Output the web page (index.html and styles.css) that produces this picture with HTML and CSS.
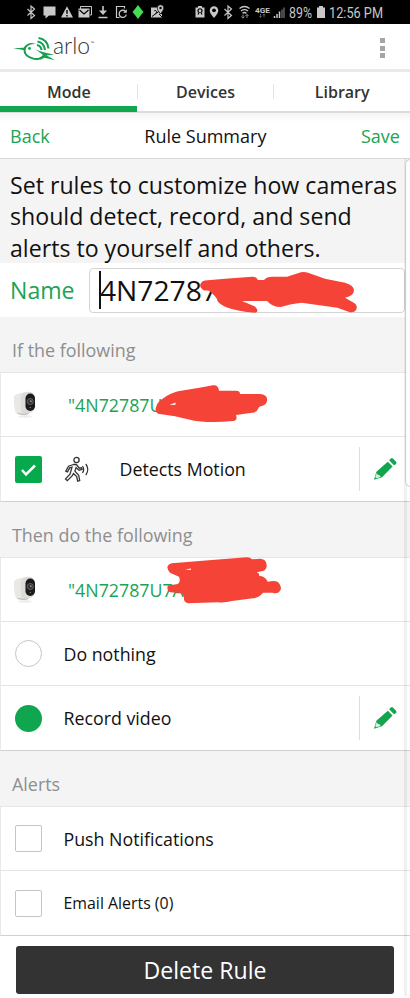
FILE: index.html
```
<!DOCTYPE html>
<html lang="en">
<head>
    <meta charset="UTF-8">
    <meta name="viewport" content="width=device-width, initial-scale=1.0">
    <title>Rule Summary</title>
    <link rel="stylesheet" href="styles.css">
</head>
<body>
    <!-- shared icons -->
    <svg class="defs" width="0" height="0">
        <symbol id="bluetooth" viewBox="0 0 18 24">
            <path d="M5.500 9l7 6.500L9 18.500V6l3.500 3L5.500 15.500" fill="none" stroke="#c8c8c8" stroke-width="1.200"/>
        </symbol>
        <symbol id="pencil" viewBox="0 0 24 24">
            <path d="M14.800 4.700l4.800 4.800L9 20.200 1 22.800l2.400-8z" fill="#13a54e"/>
            <path d="M3.700 16l-1.500 4.200 1.500 1 4-1.300-1.300-1.800-1.400-.2z" fill="#d5f0df"/>
            <path d="M16.100 3.300l1.700-1.700q1.200-1 2.300.1l3 3q.8 1.200 0 2.200L21 8.300z" fill="#13a54e"/>
        </symbol>
        <symbol id="camera" viewBox="0 0 24 30">
            <ellipse cx="12" cy="26.500" rx="7" ry="1.500" fill="#efefef"/>
            <path d="M1 9q0-4 4-5l8-2q8-1 9 5v9q-.5 5-4 6.500l-7 2q-8 .5-9-4.500z" fill="#dcdbd8"/>
            <path d="M1 9q0-4 4-5l6-1.500Q7 5 7.500 11l1 13.200q-6-.2-6.500-4.200z" fill="#e9e8e5"/>
            <rect x="12.500" y="3.500" width="9.500" height="17.500" rx="4.700" fill="#1b1b1d"/>
            <circle cx="17.300" cy="11.500" r="3" fill="#303034" stroke="#68686c"/>
            <circle cx="17.800" cy="11.200" r="1" fill="#8e8e93"/>
            <circle cx="17.300" cy="17.500" r=".8" fill="#77777a"/>
            <path d="M4.500 23.500q6 1.800 11 .3" stroke="#b5b5b5" fill="none"/>
        </symbol>
    </svg>

    <div class="status-bar">
        <div class="status-left">
            <svg width="18" height="24"><use href="#bluetooth"/></svg>
            <svg width="18" height="24"><path d="M3.500 6.500h12v9H9l-3.500 3v-3h-2z" fill="#c8c8c8"/></svg>
            <svg width="18" height="24"><path d="M9 6.300l6 11.200H3z" fill="#c8c8c8"/><path d="M9 10v3.800M9 15v1.400" stroke="#000" stroke-width="1.400"/></svg>
            <svg width="18" height="24"><path d="M4.500 9V6.500h11V15H14" fill="none" stroke="#c8c8c8"/><rect x="2.500" y="8.500" width="11" height="9" fill="#c8c8c8"/><path d="M3.500 10l4.500 4 4.500-4" fill="none" stroke="#000" stroke-width="1.200"/></svg>
            <svg width="18" height="24"><path d="M9 6v7.500M4.500 17.500h9" stroke="#c8c8c8" stroke-width="1.600"/><path d="M5 10.500h8l-4 4.500z" fill="#c8c8c8"/></svg>
            <svg width="18" height="24"><path d="M12.500 8.500v-2h-8v11h3" fill="none" stroke="#c8c8c8" stroke-width="1.200"/><path d="M13.500 11.500a3.600 3.600 0 1 0 .8 3" fill="none" stroke="#c8c8c8" stroke-width="1.300"/><path d="M11.200 12.800h3.600V9.300z" fill="#c8c8c8"/></svg>
            <svg width="18" height="24"><path d="M8 5q2.500 3.500 5.500 7-3 3.500-5.500 7-2.500-3.500-5.500-7Q5.500 8.500 8 5z" fill="#42df55"/></svg>
            <svg width="18" height="24"><path d="M3 7.500h7v4l3 3 1-1v4H3z" fill="#c8c8c8"/><path d="M4 16.500l8-6M6 11a1.500 1.500 0 1 1 1 2.500M11 14l3 3" fill="none" stroke="#000"/><path d="M12.500 14q-3.300-4-3.300-6a3.300 3.300 0 0 1 6.600 0q0 2-3.300 6z" fill="#c8c8c8" stroke="#000" stroke-width=".7"/><circle cx="12.500" cy="8" r="1.200"/></svg>
        </div>
        <div class="status-right">
            <svg width="14" height="24"><path d="M5 6h4v1.500h2.500v10h-9v-10H5z" fill="#c8c8c8"/><path d="M5 14.500l1-2a2 2 0 1 1 2 0l1 2" fill="none" stroke="#000" stroke-width="1.200"/></svg>
            <svg width="14" height="24"><path d="M7 18q-4.300-5-4.300-7.500a4.300 4.300 0 0 1 8.600 0Q11.300 13 7 18z" fill="#c8c8c8"/><circle cx="7" cy="10.300" r="1.900"/></svg>
            <svg width="14" height="24" viewBox="2 0 14 24"><use href="#bluetooth" width="18" height="24"/></svg>
            <svg width="19" height="24"><path d="M4.500 8.500q5-4 10 0M6 11q3.500-2.600 7 0M7.500 13.200q2-1.400 4 0" fill="none" stroke="#c8c8c8" stroke-width="1.300"/><path d="M8 18v-3.500M6.500 16.500L8 18.200l1.500-1.700M12 18v-3.500M10.500 16L12 14.300l1.500 1.700" fill="none" stroke="#999" stroke-width=".9"/></svg>
            <svg width="17" height="24"><text x="1" y="12.500" class="network" textLength="15" lengthAdjust="spacingAndGlyphs">4GE</text><path d="M6.500 14v3.500M5.500 16l1 1.500 1-1.500M10 17.500V14M9 15.500l1-1.500 1 1.500" fill="none" stroke="#777" stroke-width=".7"/></svg>
            <svg width="15" height="24"><path d="M3.500 16v2M6 14v4M8.500 11.500V18" stroke="#c8c8c8" stroke-width="1.500"/><path d="M11 9.500V18M13 7.500V18" stroke="#777" stroke-width="1.200"/></svg>
            <svg width="28" height="24"><text x="3" y="18" class="status-text" textLength="23" lengthAdjust="spacingAndGlyphs">89%</text></svg>
            <svg width="14" height="24"><path d="M5 6h4v1.500h2v10.500H3V7.500h2z" fill="#c8c8c8"/></svg>
            <svg width="58" height="24"><text x="1" y="18" class="status-text" textLength="54" lengthAdjust="spacingAndGlyphs">12:56 PM</text></svg>
        </div>
    </div>

    <header class="app-bar">
        <svg class="logo" width="92" height="32" viewBox="0 0 92 32">
            <path d="M0 12.300l10.500-.5Q13.500 7 19 7l5 1.200q-8-.7-11 3.800-2.500 7 7.500 9.800 6 1.200 9.500-2.800l-7.500-5.700q7.500 3.500 18.500 5.200-4 1-7.500.8l8.500 5-10.500-2.500q-5 3.500-11.500 1.700-10-3-9.500-9.500z" fill="#16a050"/>
            <circle cx="16.500" cy="12.500" r="1.400" fill="#16a050"/>
            <path d="M24 9q4 .8 4.500 5M24.500 5.500q6.500 1 7.500 8.500M25.500 2q9 1.500 10 10.500" fill="none" stroke="#16a050" stroke-width="2.100"/>
            <text x="40" y="18" class="brand" textLength="37" lengthAdjust="spacingAndGlyphs">arlo</text>
            <text x="77.500" y="8.500" class="tm">™</text>
        </svg>
        <div class="overflow-menu"><i></i><i></i><i></i></div>
    </header>

    <nav class="tabs">
        <div class="tab active">Mode</div>
        <div class="tab">Devices</div>
        <div class="tab">Library</div>
    </nav>

    <div class="title-bar">
        <a class="link">Back</a>
        <h1>Rule Summary</h1>
        <a class="link">Save</a>
    </div>

    <main>
        <p class="intro">Set rules to customize how cameras should detect, record, and send alerts to yourself and others.</p>

        <div class="name-row">
            <label>Name</label>
            <div class="name-input">4N72787</div>
            <svg class="redact redact-name" width="160" height="50" viewBox="0 0 160 50">
                <path d="M5 14.500L25 12.700 52 10.700q4-.5 6 3.300h6q3-3.300 8-3.300h15l14-4.500q4-.7 7 .5l17 6 20 4q9 3 9 7.300 0 6-9 7.700l7 4q6 3 4.500 7.300-2 4.500-8 2.700l-11-4-36-5q-10 1-21 4.300-8 0-13.500-6H42l13 5.500q5 5.500 0 6.200l-10-1q-17-2.700-23-6.700-5-3-5-6-5-7-9-8.500H4q-5-3-3.500-6.500 1-3 4.500-3.500z" fill="#f64338"/>
            </svg>
        </div>

        <h2>If the following</h2>
        <div class="row">
            <svg class="camera" width="24" height="30"><use href="#camera"/></svg>
            <span class="device">"4N72787U</span>
            <svg class="redact redact-if" width="116" height="42" viewBox="0 0 116 42">
                <path d="M1.700 25.300Q3 19 9 15.500q7-5.500 15-7.300L44 5l15-2.800q5.500-.7 6 5.500h17q4 0 4 3.300h20q7 .5 7.200 5.500-.2 5-5.200 6.500-3 0-4 3-1 3-4 3.500L82 32q2 5.500-3 6-26 2.500-42-1l-16-3.700-17-2.600q-3-1.700-2.300-5.400z" fill="#f64338"/>
                <path d="M15.500 22l6-2.500v2.300z" fill="#fff"/>
            </svg>
        </div>
        <div class="row last">
            <div class="checkbox checked">
                <svg width="27" height="27"><path d="M7 14l4 4.500 9-9" fill="none" stroke="#fff" stroke-width="2.500"/></svg>
            </div>
            <svg class="motion" width="26" height="27" viewBox="0 0 26 27" fill="none" stroke="#333" stroke-width="1.300">
                <circle cx="12.500" cy="4" r="2.600"/>
                <path d="M9.500 8.500l-5 1.700-2.700 5 1.700.7 2.200-4 2.300-.7-2 7-4.500 4.700 1.800 1.700 5-5 1.200-2 3.200 3 1 4.500 2-.6-1-5.200-3.800-4.200 1.200-3.500 3 2.700 3-1-.5-1.500-2.200.4-3-3.700z"/>
                <path d="M18.500 10q2.300 3.500 0 7M21.800 8q4 5.500 0 11"/>
            </svg>
            <span class="label">Detects Motion</span>
            <div class="edit"><svg width="24" height="24"><use href="#pencil"/></svg></div>
        </div>

        <h2>Then do the following</h2>
        <div class="row">
            <svg class="camera" width="24" height="30"><use href="#camera"/></svg>
            <span class="device">"4N72787U7A</span>
            <svg class="redact redact-then" width="118" height="50" viewBox="0 0 118 50">
                <path d="M6.700 6.300L50 2.800 81.700.3q4 0 5.300 2l8-.5q6 0 6.700 6.200 0 5-3.700 6l-6.300 1.300q3 .5 2.500 3.700 6 0 8.500 5.700 9-1.700 11 1 4 5 1 8.500-2 3-7 1.500h-9.700q-4 5-10 5.600L67 44q-7 2-14 1.300l-30 1q-5-1.500-4-6.600l-2.300-3.700-11.700-.7Q1 33 3 28.500l10-1.500q3-3 1-7.300l-9-4Q-1 9 6.700 6.300z" fill="#f64338"/>
                <path d="M20 12.500l6-1v1.500z" fill="#fff"/>
            </svg>
        </div>
        <div class="row">
            <div class="radio"></div>
            <span class="label">Do nothing</span>
        </div>
        <div class="row last">
            <div class="radio selected"></div>
            <span class="label">Record video</span>
            <div class="edit"><svg width="24" height="24"><use href="#pencil"/></svg></div>
        </div>

        <h2>Alerts</h2>
        <div class="row">
            <div class="checkbox"></div>
            <span class="label">Push Notifications</span>
        </div>
        <div class="row last">
            <div class="checkbox"></div>
            <span class="label small">Email Alerts (0)</span>
        </div>
        <div class="scroll-track"></div>
        <div class="scroll-thumb"></div>
    </main>

    <footer>
        <button class="delete-btn">Delete Rule</button>
    </footer>
</body>
</html>
```
FILE: styles.css
```
* {
    box-sizing: border-box;
}

body {
    margin: 0;
    width: 410px;
    height: 998px;
    overflow: hidden;
    background: #fff;
    color: #111;
    font-family: "Open Sans", sans-serif;
}

svg {
    display: block;
    flex-shrink: 0;
    overflow: visible;
}

.defs {
    position: absolute;
}

.status-bar {
    display: flex;
    justify-content: space-between;
    height: 24px;
    padding: 0 24px 0 22px;
    background: #000;
}

.status-left,
.status-right {
    display: flex;
}

.status-text {
    font: 15px Roboto, sans-serif;
    fill: #c8c8c8;
}

.network {
    font: bold 8px Roboto, sans-serif;
    fill: #c8c8c8;
}

.app-bar {
    display: flex;
    justify-content: space-between;
    align-items: flex-start;
    height: 48px;
    padding: 11px 25px 0 13px;
    border-bottom: 3px solid #e9e9e9;
}

.logo {
    margin-top: 1px;
}

.brand {
    font: 300 24px Lato, sans-serif;
    fill: #333;
}

.tm {
    font: 5px Lato, sans-serif;
    fill: #555;
}

.overflow-menu {
    display: flex;
    flex-direction: column;
    gap: 2.5px;
    padding-top: 3px;
}

.overflow-menu i {
    width: 5px;
    height: 5px;
    background: #a5a5a5;
}

.tabs {
    display: flex;
    height: 41px;
    border-bottom: 2px solid #dcdcdc;
}

.tab {
    position: relative;
    flex: 1;
    padding-left: 1px;
    font-size: 16px;
    font-weight: 600;
    line-height: 40px;
    text-align: center;
    color: #333;
}

.tab + .tab::before {
    content: '';
    position: absolute;
    left: 0;
    top: 12px;
    width: 1px;
    height: 15px;
    background: #e4e4e4;
}

.tab.active {
    height: 40px;
    border-bottom: 6px solid #0fa64f;
}

.title-bar {
    display: flex;
    justify-content: space-between;
    align-items: center;
    height: 46px;
    padding: 0 10px;
    background: linear-gradient(#f4f4f4, #fff 9px);
    border-bottom: 1px solid #d8d8d8;
    font-size: 18px;
}

.title-bar h1 {
    margin: 0;
    font-size: 18px;
    font-weight: 400;
}

.link {
    color: #1aa454;
}

main {
    position: relative;
}

.intro {
    height: 104px;
    margin: 0;
    padding: 11px 5px 0 10px;
    background: #f4f4f4;
    font-size: 23.15px;
    line-height: 31.4px;
}

.name-row {
    position: relative;
    display: flex;
    align-items: center;
    height: 54px;
    padding: 0 5px 0 10px;
}

.name-row label {
    width: 79px;
    font-size: 23.1px;
    color: #1aa454;
}

.name-input {
    flex: 1;
    height: 45px;
    padding-left: 9px;
    border: 1px solid #d4d4d4;
    border-radius: 4px;
    font-size: 28.2px;
    line-height: 42px;
}

/* text cursor */
.name-input::before {
    content: '';
    display: inline-block;
    width: 2px;
    height: 38px;
    margin-right: -1px;
    background: #111;
    vertical-align: -8px;
}

h2 {
    height: 56px;
    margin: 0;
    padding-left: 12px;
    background: #f4f4f4;
    border-bottom: 1px solid #e6e6e6;
    font-size: 17.9px;
    font-weight: 400;
    line-height: 67px;
    color: #8e8e8e;
}

.row {
    position: relative;
    display: flex;
    align-items: center;
    height: 64px;
    padding-left: 13.5px;
    border-left: 1px solid #e9e9e9;
    border-bottom: 1px solid #e4e4e4;
    font-size: 17.8px;
}

.row.last {
    height: 65px;
    border-bottom-color: #d0d0d0;
}

.camera {
    margin: 0 31.5px 0 -2px;
}

.device {
    color: #1aa454;
}

.checkbox,
.radio {
    width: 27px;
    height: 27px;
    margin-right: 22px;
    border: 1px solid #c4c4c4;
    border-radius: 2px;
}

.checkbox.checked {
    border: none;
    background: #07a94d;
}

.radio {
    border-radius: 50%;
}

.radio.selected {
    border: none;
    background: #0fa64f;
}

.motion {
    margin-right: 30px;
}

.label.small {
    font-size: 15.9px;
}

.edit {
    display: flex;
    justify-content: center;
    align-items: center;
    width: 51px;
    height: 44px;
    margin-left: auto;
    border-left: 1px solid #ddd;
}

.redact {
    position: absolute;
}

.redact-name {
    left: 200px;
    top: 3px;
}

.redact-if {
    left: 153px;
    top: 10px;
}

.redact-then {
    left: 164px;
    top: -1px;
}

.scroll-track {
    position: absolute;
    top: 0;
    right: 3px;
    bottom: -60px;
    width: 3px;
    background: rgba(0, 0, 0, 0.06);
}

.scroll-thumb {
    position: absolute;
    top: 0;
    right: -6px;
    width: 11px;
    height: 328px;
    background: rgba(255, 255, 255, 0.8);
    border: 1px solid #ccc;
    border-radius: 6px;
}

footer {
    padding: 10px 16px 0;
}

.delete-btn {
    display: block;
    width: 100%;
    height: 48px;
    padding: 0 0 1px;
    background: #333;
    color: #fff;
    border: none;
    border-radius: 3px;
    font-family: inherit;
    font-size: 23.1px;
}
```
